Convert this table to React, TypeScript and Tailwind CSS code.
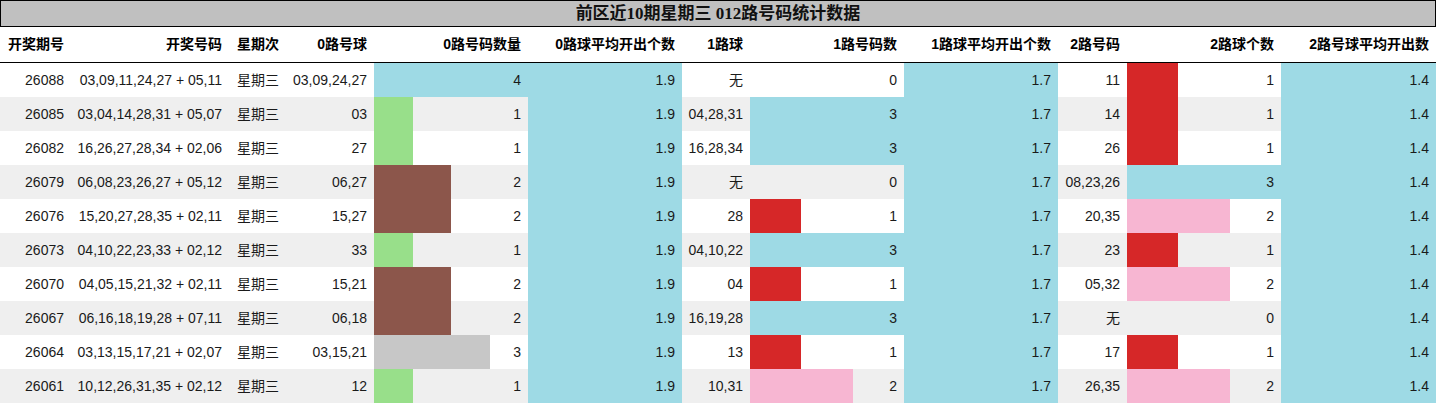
const BLUE = "#9edae5";
const GREEN = "#98df8a";
const BROWN = "#8c564b";
const GRAY = "#c7c7c7";
const RED = "#d62728";
const PINK = "#f7b6d2";

const zeroColors: Record<number, string> = { 1: GREEN, 2: BROWN, 3: GRAY, 4: BLUE };
const oneColors: Record<number, string> = { 1: RED, 2: PINK, 3: BLUE };
const twoColors: Record<number, string> = { 1: RED, 2: PINK, 3: BLUE };

type Row = {
  issue: string;
  nums: string;
  zero: string;
  zeroCount: number;
  one: string;
  oneCount: number;
  two: string;
  twoCount: number;
};

const rows: Row[] = [
  { issue: "26088", nums: "03,09,11,24,27 + 05,11", zero: "03,09,24,27", zeroCount: 4, one: "无", oneCount: 0, two: "11", twoCount: 1 },
  { issue: "26085", nums: "03,04,14,28,31 + 05,07", zero: "03", zeroCount: 1, one: "04,28,31", oneCount: 3, two: "14", twoCount: 1 },
  { issue: "26082", nums: "16,26,27,28,34 + 02,06", zero: "27", zeroCount: 1, one: "16,28,34", oneCount: 3, two: "26", twoCount: 1 },
  { issue: "26079", nums: "06,08,23,26,27 + 05,12", zero: "06,27", zeroCount: 2, one: "无", oneCount: 0, two: "08,23,26", twoCount: 3 },
  { issue: "26076", nums: "15,20,27,28,35 + 02,11", zero: "15,27", zeroCount: 2, one: "28", oneCount: 1, two: "20,35", twoCount: 2 },
  { issue: "26073", nums: "04,10,22,23,33 + 02,12", zero: "33", zeroCount: 1, one: "04,10,22", oneCount: 3, two: "23", twoCount: 1 },
  { issue: "26070", nums: "04,05,15,21,32 + 02,11", zero: "15,21", zeroCount: 2, one: "04", oneCount: 1, two: "05,32", twoCount: 2 },
  { issue: "26067", nums: "06,16,18,19,28 + 07,11", zero: "06,18", zeroCount: 2, one: "16,19,28", oneCount: 3, two: "无", twoCount: 0 },
  { issue: "26064", nums: "03,13,15,17,21 + 02,07", zero: "03,15,21", zeroCount: 3, one: "13", oneCount: 1, two: "17", twoCount: 1 },
  { issue: "26061", nums: "10,12,26,31,35 + 02,12", zero: "12", zeroCount: 1, one: "10,31", oneCount: 2, two: "26,35", twoCount: 2 },
];

const headers = [
  "开奖期号",
  "开奖号码",
  "星期次",
  "0路号球",
  "0路号码数量",
  "0路球平均开出个数",
  "1路球",
  "1路号码数",
  "1路球平均开出个数",
  "2路号码",
  "2路球个数",
  "2路号球平均开出数",
];

const cols =
  "grid grid-cols-[71px_158px_58px_87px_154px_154px_68px_154px_154px_69px_154px_155px]";

function BarCell({ value, max, color }: { value: number; max: number; color?: string }) {
  return (
    <div className="grid h-full">
      <div className="[grid-area:1/1] h-full">
        {value > 0 && (
          <div className="h-full" style={{ width: `${(value / max) * 100}%`, backgroundColor: color }} />
        )}
      </div>
      <div className="[grid-area:1/1] flex items-center justify-end pr-[7px]">{value}</div>
    </div>
  );
}

function Cell({ children, left, blue }: { children: React.ReactNode; left?: boolean; blue?: boolean }) {
  return (
    <div
      className={`flex h-full items-center whitespace-nowrap ${left ? "justify-start pl-2" : "justify-end pr-[7px]"} ${
        blue ? "bg-[#9edae5]" : ""
      }`}
    >
      {children}
    </div>
  );
}

export default function App() {
  return (
    <div className="w-[1436px] bg-white text-[14px] text-[#1a1a1a] font-['Liberation_Sans','Noto_Sans_CJK_SC',sans-serif]">
      <div className="flex h-[27px] items-center justify-center border border-black bg-[#c0c0c0] text-[17px] font-bold text-[#111] font-['Liberation_Serif','Noto_Sans_CJK_SC',serif]">
        前区近10期星期三 012路号码统计数据
      </div>
      <div className={`${cols} h-[36px] border-b border-black font-bold text-black`}>
        {headers.map((h, i) => (
          <Cell key={h} left={i === 2}>
            {h}
          </Cell>
        ))}
      </div>
      {rows.map((r, i) => (
        <div key={r.issue} className={`${cols} h-[34px] ${i % 2 === 1 ? "bg-[#efefef]" : "bg-white"}`}>
          <Cell>{r.issue}</Cell>
          <Cell>{r.nums}</Cell>
          <Cell left>星期三</Cell>
          <Cell>{r.zero}</Cell>
          <BarCell value={r.zeroCount} max={4} color={zeroColors[r.zeroCount]} />
          <Cell blue>1.9</Cell>
          <Cell>{r.one}</Cell>
          <BarCell value={r.oneCount} max={3} color={oneColors[r.oneCount]} />
          <Cell blue>1.7</Cell>
          <Cell>{r.two}</Cell>
          <BarCell value={r.twoCount} max={3} color={twoColors[r.twoCount]} />
          <Cell blue>1.4</Cell>
        </div>
      ))}
    </div>
  );
}
